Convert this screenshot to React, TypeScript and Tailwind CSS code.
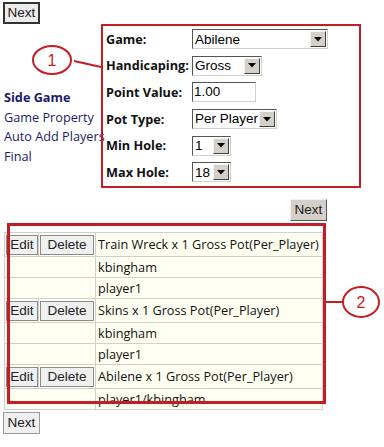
import React from "react";

const ui = { fontFamily: '"Open Sans", "Noto Sans", sans-serif' };
const arial = { fontFamily: '"Liberation Sans", Arial, sans-serif' };

function Arrow() {
  return (
    <div className="flex h-[16px] w-[16px] items-center justify-center border border-t-[#f4f4f4] border-l-[#f4f4f4] border-b-[#404040] border-r-[#404040] bg-[#d4d0c8]">
      <svg width="8" height="5" viewBox="0 0 8 5">
        <polygon points="0,0 8,0 4,4.5" fill="#000" />
      </svg>
    </div>
  );
}

function Select({ value, width }: { value: string; width: string }) {
  return (
    <div
      className={`flex h-[20px] items-center justify-between border border-t-[#555] border-l-[#555] border-b-[#d0d0d0] border-r-[#d0d0d0] bg-white pl-[2px] pr-[1px] text-[13.5px] text-black ${width}`}
      style={arial}
    >
      <span className="leading-none">{value}</span>
      <Arrow />
    </div>
  );
}

function NextBtn({ variant }: { variant: "top" | "mid" | "bottom" }) {
  const cls =
    variant === "top"
      ? "border-2 border-[#333] bg-[#ececec]"
      : variant === "mid"
      ? "border border-t-[#f0f0f0] border-l-[#f0f0f0] border-b-[#555] border-r-[#555] bg-[#d4d0c8]"
      : "border border-[#9a9a9a] bg-[#f0f0f0]";
  return (
    <div
      className={`flex h-[22px] w-[37px] items-center justify-center text-[13.5px] text-[#222] ${cls}`}
      style={arial}
    >
      Next
    </div>
  );
}

function SmallBtn({ label, w }: { label: string; w: string }) {
  return (
    <div
      className={`flex h-[20px] items-center justify-center border border-[#8a8a8a] bg-[#f0f0f0] text-[13.5px] text-[#222] ${w}`}
      style={arial}
    >
      {label}
    </div>
  );
}

const rows: { kind: "edit" | "text"; text: string }[] = [
  { kind: "edit", text: "Train Wreck x 1 Gross Pot(Per_Player)" },
  { kind: "text", text: "kbingham" },
  { kind: "text", text: "player1" },
  { kind: "edit", text: "Skins x 1 Gross Pot(Per_Player)" },
  { kind: "text", text: "kbingham" },
  { kind: "text", text: "player1" },
  { kind: "edit", text: "Abilene x 1 Gross Pot(Per_Player)" },
  { kind: "text", text: "player1/kbingham" },
];

export default function App() {
  const formRows: { label: string; field: React.ReactNode }[] = [
    { label: "Game:", field: <Select value="Abilene" width="w-[136px]" /> },
    { label: "Handicaping:", field: <Select value="Gross" width="w-[70px]" /> },
    {
      label: "Point Value:",
      field: (
        <div
          className="flex h-[20px] w-[64px] items-center border border-t-[#555] border-l-[#555] border-b-[#d0d0d0] border-r-[#d0d0d0] bg-white pl-[1px] text-[13.5px] text-black"
          style={arial}
        >
          1.00
        </div>
      ),
    },
    { label: "Pot Type:", field: <Select value="Per Player" width="w-[85px]" /> },
    { label: "Min Hole:", field: <Select value="1" width="w-[39px]" /> },
    { label: "Max Hole:", field: <Select value="18" width="w-[39px]" /> },
  ];

  return (
    <div className="relative h-[447px] w-[384px] overflow-hidden bg-white" style={ui}>
      <div className="pl-[3px] pt-[2px]">
        <NextBtn variant="top" />
      </div>

      <div className="flex">
        <div className="mt-[64px] w-[101px] shrink-0 pl-[4px] text-[12.7px] leading-[19.7px] text-[#1b1b6b] whitespace-nowrap">
          <div className="font-bold">Side Game</div>
          <div>Game Property</div>
          <div>Auto Add Players</div>
          <div>Final</div>
        </div>
        <div className="relative z-10 h-[164px] w-[260px] shrink-0 border-2 border-[#c41e24] pl-[3px]">
          {formRows.map((r) => (
            <div key={r.label} className="flex h-[26.6px] items-center">
              <div className="w-[86px] text-[12.7px] font-bold text-[#111]">{r.label}</div>
              {r.field}
            </div>
          ))}
        </div>
      </div>

      <div className="mt-[11px] flex w-[327px] justify-end">
        <NextBtn variant="mid" />
      </div>

      <table className="ml-[4px] mt-[11px] w-[319px] border-collapse bg-[#fffff2] text-[12.7px] leading-[17px] text-[#111]">
        <colgroup>
          <col className="w-[34px]" />
          <col className="w-[57px]" />
          <col />
        </colgroup>
        <tbody>
          {rows.map((r, i) =>
            r.kind === "edit" ? (
              <tr key={i} className="h-[24px]">
                <td className="border border-[#cfcfcf] p-0 pl-[1px]">
                  <SmallBtn label="Edit" w="w-[32px]" />
                </td>
                <td className="border border-[#cfcfcf] p-0 pl-[1px]">
                  <SmallBtn label="Delete" w="w-[54px]" />
                </td>
                <td className="border border-[#cfcfcf] p-0 pl-[2px] whitespace-nowrap">{r.text}</td>
              </tr>
            ) : (
              <tr key={i} className="h-[21px]">
                <td colSpan={2} className="border border-[#cfcfcf] p-0" />
                <td className="border border-[#cfcfcf] p-0 pl-[2px] whitespace-nowrap">{r.text}</td>
              </tr>
            )
          )}
        </tbody>
      </table>

      <div className="mt-[2px] pl-[3px]">
        <NextBtn variant="bottom" />
      </div>

      <div className="pointer-events-none absolute left-[7px] top-[223px] h-[181px] w-[319px] border-[3px] border-[#c41e24]" />

      <svg className="pointer-events-none absolute left-0 top-0" width="384" height="447">
        <ellipse cx="52" cy="60" rx="19" ry="14" fill="none" stroke="#c41e24" strokeWidth="2" />
        <text x="52" y="66" textAnchor="middle" fontSize="16" fill="#c41e24" fontFamily="Liberation Sans, Arial, sans-serif">1</text>
        <line x1="74" y1="61" x2="101" y2="67" stroke="#c41e24" strokeWidth="2" />
        <ellipse cx="361" cy="302" rx="18" ry="15" fill="none" stroke="#c41e24" strokeWidth="2" />
        <text x="361" y="308" textAnchor="middle" fontSize="16" fill="#c41e24" fontFamily="Liberation Sans, Arial, sans-serif">2</text>
        <line x1="326" y1="302" x2="343" y2="302" stroke="#c41e24" strokeWidth="2" />
      </svg>
    </div>
  );
}
